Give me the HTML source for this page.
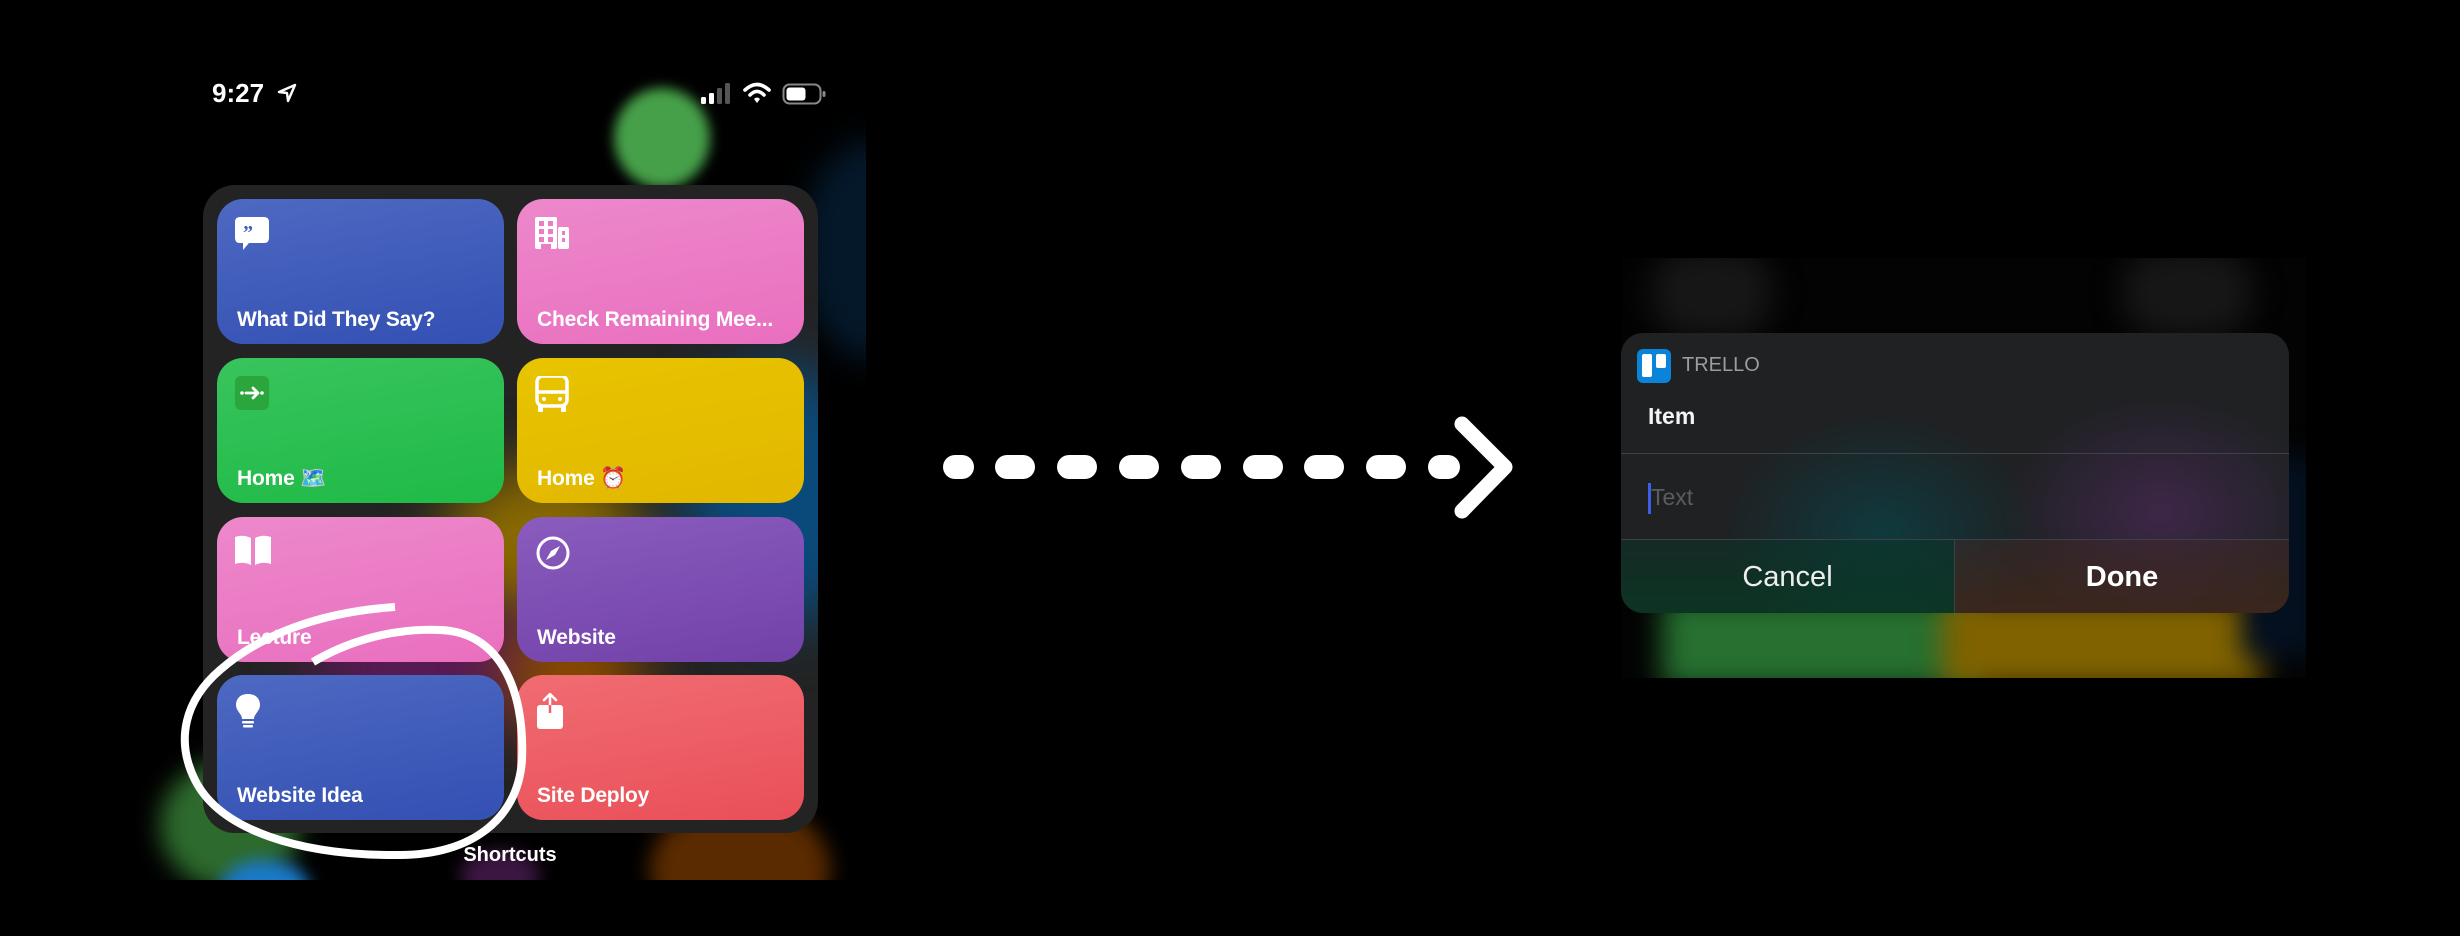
<!DOCTYPE html>
<html><head><meta charset="utf-8"><style>
*{margin:0;padding:0;box-sizing:border-box}
body{width:2460px;height:936px;background:#000;position:relative;overflow:hidden;font-family:"Liberation Sans","DejaVu Sans",sans-serif;color:#fff}
.a{position:absolute}
.tile{position:absolute;width:287px;height:145px;border-radius:26px}
.lbl{position:absolute;left:20px;top:110px;font-size:21px;font-weight:bold;white-space:nowrap;line-height:1;letter-spacing:-0.2px}
.ic{position:absolute;left:18px;top:18px}
</style></head><body>

<div class="a" style="left:0;top:0;width:866px;height:880px;overflow:hidden">
  <div class="a" style="left:614px;top:88px;width:96px;height:100px;border-radius:50%;background:#46a049;filter:blur(6px)"></div>
  <div class="a" style="left:800px;top:140px;width:150px;height:220px;border-radius:50%;background:#04182a;filter:blur(16px)"></div>
  <div class="a" style="left:160px;top:760px;width:140px;height:130px;border-radius:50%;background:#2d6a2d;filter:blur(12px)"></div>
  <div class="a" style="left:220px;top:860px;width:90px;height:60px;border-radius:50%;background:#1b7ac8;filter:blur(8px)"></div>
  <div class="a" style="left:650px;top:800px;width:180px;height:140px;border-radius:50%;background:#5a2a00;filter:blur(10px)"></div>
  <div class="a" style="left:460px;top:850px;width:80px;height:50px;border-radius:50%;background:#3a1640;filter:blur(8px)"></div>

  <div class="a" style="left:212px;top:80px;font-size:26px;font-weight:bold;line-height:1">9:27</div>
  <svg class="a" style="left:276px;top:82px" width="22" height="22" viewBox="0 0 22 22"><path d="M19 3 L3 10 L11 11 L12 19 Z" fill="none" stroke="#fff" stroke-width="2.4" stroke-linejoin="round"/></svg>
  <svg class="a" style="left:700px;top:83px" width="34" height="22" viewBox="0 0 34 22"><rect x="1" y="14" width="5" height="7" rx="1.5" fill="#fff"/><rect x="9" y="10" width="5" height="11" rx="1.5" fill="#fff"/><rect x="17" y="5" width="5" height="16" rx="1.5" fill="#555"/><rect x="25" y="0" width="5" height="21" rx="1.5" fill="#555"/></svg>
  <svg class="a" style="left:743px;top:82px" width="28" height="22" viewBox="0 0 28 22"><path d="M2 8 Q14 -3 26 8" fill="none" stroke="#fff" stroke-width="3.6" stroke-linecap="round"/><path d="M7 13 Q14 6 21 13" fill="none" stroke="#fff" stroke-width="3.6" stroke-linecap="round"/><path d="M11 17 L14 21 L17 17 Q14 14 11 17Z" fill="#fff"/></svg>
  <svg class="a" style="left:782px;top:83px" width="45" height="22" viewBox="0 0 45 22"><rect x="1.5" y="1.5" width="37" height="19" rx="6" fill="none" stroke="#888" stroke-width="2"/><rect x="4.5" y="4.5" width="19" height="13" rx="3" fill="#fff"/><rect x="40.5" y="8" width="3" height="6" rx="1.5" fill="#888"/></svg>

  <div class="a" style="left:203px;top:185px;width:615px;height:648px;border-radius:32px;background:#232323;overflow:hidden">
    <div class="a" style="left:240px;top:280px;width:200px;height:160px;border-radius:50%;background:#8a6a00;filter:blur(30px)"></div>
    <div class="a" style="left:480px;top:180px;width:200px;height:260px;border-radius:50%;background:#0a4a7a;filter:blur(30px)"></div>
    <div class="a" style="left:100px;top:420px;width:260px;height:120px;border-radius:50%;background:#5a1a55;filter:blur(30px)"></div>
    <div class="a" style="left:300px;top:430px;width:140px;height:120px;border-radius:50%;background:#8a4a00;filter:blur(30px)"></div>
  </div>

  <div class="tile" style="left:217px;top:199px;background:linear-gradient(170deg,#4d69c2,#3350b3)">
    <svg class="ic" width="34" height="36" viewBox="0 0 34 36"><path d="M5 0 H29 Q34 0 34 5 V21 Q34 26 29 26 H14 L8 33 V26 H5 Q0 26 0 21 V5 Q0 0 5 0Z" fill="#fff"/><text x="8" y="22" font-size="20" font-weight="bold" fill="#3f5bbb" font-family="Liberation Serif,serif">”</text></svg>
    <div class="lbl">What Did They Say?</div>
  </div>
  <div class="tile" style="left:517px;top:199px;background:linear-gradient(170deg,#ed88cb,#e96fbf)">
    <svg class="ic" width="36" height="34" viewBox="0 0 36 34"><rect x="0" y="0" width="22" height="32" rx="2" fill="#fff"/><rect x="23" y="10" width="11" height="22" rx="2" fill="#fff"/><g fill="#eb7cc5"><rect x="4" y="4" width="5" height="5"/><rect x="13" y="4" width="5" height="5"/><rect x="4" y="12" width="5" height="5"/><rect x="13" y="12" width="5" height="5"/><rect x="4" y="20" width="5" height="5"/><rect x="13" y="20" width="5" height="5"/><rect x="6" y="27" width="10" height="5"/><rect x="27" y="14" width="3" height="4"/><rect x="27" y="21" width="3" height="4"/></g></svg>
    <div class="lbl">Check Remaining Mee...</div>
  </div>
  <div class="tile" style="left:217px;top:358px;background:linear-gradient(170deg,#38c45d,#1fba47)">
    <svg class="ic" width="34" height="34" viewBox="0 0 34 34"><rect width="34" height="34" rx="6" fill="#2aa63c"/><circle cx="7" cy="17" r="1.8" fill="#fff"/><circle cx="27" cy="17" r="1.8" fill="#fff"/><path d="M11 17 H22 M18 12 L23 17 L18 22" fill="none" stroke="#fff" stroke-width="2.8" stroke-linecap="round" stroke-linejoin="round"/></svg>
    <div class="lbl">Home 🗺️</div>
  </div>
  <div class="tile" style="left:517px;top:358px;background:linear-gradient(170deg,#e8c400,#e2b700)">
    <svg class="ic" width="34" height="36" viewBox="0 0 34 36"><rect x="2" y="0" width="30" height="30" rx="6" fill="none" stroke="#fff" stroke-width="3.5"/><path d="M2 16 H32" stroke="#fff" stroke-width="3.5"/><circle cx="9" cy="23" r="2" fill="#fff"/><circle cx="25" cy="23" r="2" fill="#fff"/><rect x="3" y="28" width="5" height="8" rx="1" fill="#fff"/><rect x="26" y="28" width="5" height="8" rx="1" fill="#fff"/></svg>
    <div class="lbl">Home ⏰</div>
  </div>
  <div class="tile" style="left:217px;top:517px;background:linear-gradient(170deg,#ed88cb,#e96fbf)">
    <svg class="ic" width="36" height="30" viewBox="0 0 36 30"><path d="M0 2 Q8 -1 16 3 V30 Q8 26 0 29Z M20 3 Q28 -1 36 2 V29 Q28 26 20 30Z" fill="#fff"/></svg>
    <div class="lbl">Lecture</div>
  </div>
  <div class="tile" style="left:517px;top:517px;background:linear-gradient(170deg,#8a5cbe,#7141a8)">
    <svg class="ic" width="36" height="36" viewBox="0 0 36 36"><circle cx="18" cy="18" r="15" fill="none" stroke="#fff" stroke-width="3"/><path d="M25 11 L20 20 L11 25 L16 16Z" fill="#fff"/></svg>
    <div class="lbl">Website</div>
  </div>
  <div class="tile" style="left:217px;top:675px;background:linear-gradient(170deg,#4d69c2,#3350b3)">
    <svg class="ic" width="30" height="36" viewBox="0 0 30 36"><path d="M15 1 C6 1 3 7 3 12 C3 18 9 21 9 26 H21 C21 21 27 18 27 12 C27 7 24 1 15 1Z" fill="#fff" transform="translate(-2 0)"/><rect x="7" y="28" width="12" height="2.5" rx="1" fill="#fff"/><rect x="8" y="32" width="10" height="2.5" rx="1" fill="#fff"/></svg>
    <div class="lbl">Website Idea</div>
  </div>
  <div class="tile" style="left:517px;top:675px;background:linear-gradient(170deg,#f06c72,#ea4f58)">
    <svg class="ic" width="30" height="36" viewBox="0 0 30 36"><rect x="2" y="12" width="26" height="24" rx="3" fill="#fff"/><path d="M15 1 V20 M9 7 L15 1 L21 7" fill="none" stroke="#fff" stroke-width="2.5" stroke-linecap="round" stroke-linejoin="round"/><path d="M15 12 V20" stroke="#ef6169" stroke-width="2.5"/></svg>
    <div class="lbl">Site Deploy</div>
  </div>

  <div class="a" style="left:410px;top:845px;width:200px;text-align:center;font-size:20px;font-weight:bold;line-height:1">Shortcuts</div>

  <svg class="a" style="left:0;top:0" width="866" height="880" viewBox="0 0 866 880">
    <path d="M313 662 C350 640 395 628 440 630 C500 632 525 690 522 760 C518 820 470 855 400 855 C300 856 220 830 195 780 C175 740 185 700 220 670 C260 635 320 612 395 607" fill="none" stroke="#fff" stroke-width="8" stroke-linecap="butt"/>
  </svg>
</div>

<svg class="a" style="left:930px;top:400px" width="600" height="140" viewBox="930 400 600 140">
  <g fill="#fff">
    <rect x="943" y="455" width="31" height="24" rx="12"/>
    <rect x="995" y="455" width="40" height="24" rx="12"/>
    <rect x="1057" y="455" width="40" height="24" rx="12"/>
    <rect x="1119" y="455" width="40" height="24" rx="12"/>
    <rect x="1181" y="455" width="40" height="24" rx="12"/>
    <rect x="1243" y="455" width="40" height="24" rx="12"/>
    <rect x="1304" y="455" width="40" height="24" rx="12"/>
    <rect x="1366" y="455" width="40" height="24" rx="12"/>
    <rect x="1428" y="455" width="32" height="24" rx="12"/>
  </g>
  <path d="M1462 424 L1505 467 L1462 511" fill="none" stroke="#fff" stroke-width="15" stroke-linecap="round" stroke-linejoin="round"/>
</svg>

<div class="a" style="left:1622px;top:258px;width:684px;height:420px;overflow:hidden;background:#030303">
  <div class="a" style="left:30px;top:-10px;width:120px;height:90px;border-radius:40%;background:#161616;filter:blur(14px)"></div>
  <div class="a" style="left:500px;top:-10px;width:130px;height:90px;border-radius:40%;background:#161616;filter:blur(14px)"></div>
  <div class="a" style="left:40px;top:340px;width:320px;height:90px;background:#267030;filter:blur(14px)"></div>
  <div class="a" style="left:320px;top:340px;width:320px;height:90px;background:#806200;filter:blur(14px)"></div>
  <div class="a" style="left:620px;top:200px;width:80px;height:200px;background:#041020;filter:blur(14px)"></div>
</div>
<div class="a" style="left:1621px;top:333px;width:668px;height:280px;border-radius:22px;overflow:hidden;background:#1f2123">
  <div class="a" style="left:380px;top:60px;width:320px;height:240px;border-radius:50%;background:radial-gradient(#3d2748,rgba(61,39,72,0) 70%);"></div>
  <div class="a" style="left:100px;top:80px;width:320px;height:240px;border-radius:50%;background:radial-gradient(#0f3a3e,rgba(15,58,62,0) 70%);"></div>
  <div class="a" style="left:0;top:206px;width:333px;height:74px;background:linear-gradient(180deg,rgba(10,50,40,0.5),rgba(5,60,35,0.7))"></div>
  <div class="a" style="left:334px;top:206px;width:334px;height:74px;background:linear-gradient(180deg,rgba(60,40,40,0.5),rgba(70,40,25,0.7))"></div>
  <svg class="a" style="left:16px;top:16px" width="34" height="34" viewBox="0 0 34 34"><rect width="34" height="34" rx="6" fill="#0a83d8"/><rect x="5" y="5" width="10" height="23" rx="2" fill="#fff"/><rect x="19" y="5" width="10" height="14" rx="2" fill="#fff"/></svg>
  <div class="a" style="left:61px;top:22px;font-size:20px;color:#9c9c9c;line-height:1">TRELLO</div>
  <div class="a" style="left:27px;top:72px;font-size:23px;font-weight:bold;line-height:1;color:#f4f4f4">Item</div>
  <div class="a" style="left:0;top:120px;width:668px;height:1px;background:#3c4246"></div>
  <div class="a" style="left:27px;top:150px;width:3px;height:31px;background:#3c5ee8"></div>
  <div class="a" style="left:30px;top:153px;font-size:23px;color:#5a5d60;line-height:1">Text</div>
  <div class="a" style="left:0;top:206px;width:668px;height:1px;background:#3c4246"></div>
  <div class="a" style="left:333px;top:206px;width:1px;height:74px;background:#3c4246"></div>
  <div class="a" style="left:0;top:230px;width:333px;text-align:center;font-size:29px;line-height:1;color:#eee">Cancel</div>
  <div class="a" style="left:334px;top:230px;width:334px;text-align:center;font-size:29px;font-weight:bold;line-height:1;color:#fff">Done</div>
</div>
</body></html>
